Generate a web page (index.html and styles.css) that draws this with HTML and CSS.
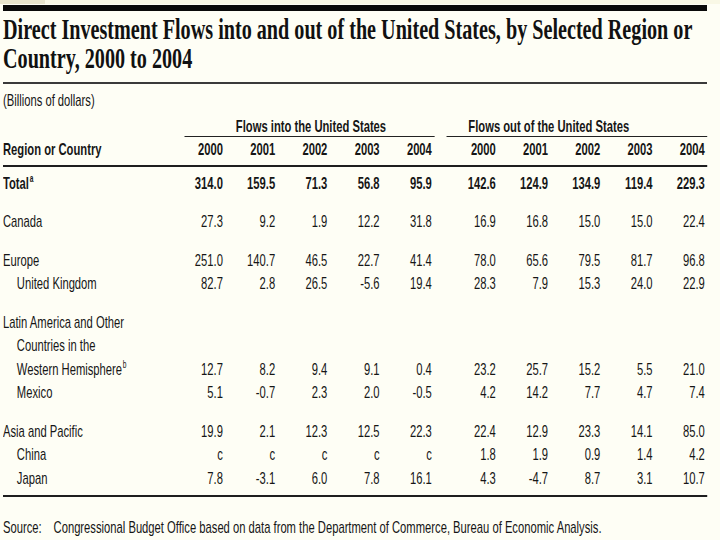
FILE: index.html
```html
<!DOCTYPE html>
<html lang="en">
<head>
<meta charset="utf-8">
<title>Direct Investment Flows into and out of the United States</title>
<link rel="stylesheet" href="styles.css">
</head>
<body>
<div class="strip"><span class="strip-tab"></span></div>
<main class="sheet">
  <div class="bar"></div>
  <h1 class="title">Direct Investment Flows into and out of the United States, by Selected Region or<br>Country, 2000 to 2004</h1>
  <div class="rule-thin"></div>
  <div class="condensed">
    <p class="unit">(Billions of dollars)</p>
    <div class="grid groups">
      <div class="group-head inflow">Flows into the United States</div>
      <div class="group-head outflow">Flows out of the United States</div>
    </div>
    <div class="grid head">
      <div class="label">Region or Country</div>
      <div class="num">2000</div><div class="num">2001</div><div class="num">2002</div><div class="num">2003</div><div class="num">2004</div>
      <div class="num">2000</div><div class="num">2001</div><div class="num">2002</div><div class="num">2003</div><div class="num">2004</div>
    </div>
    <div class="tbody">
      <div class="group first">
        <div class="grid row total">
          <div class="label">Total<sup class="note">a</sup></div>
          <div class="num">314.0</div><div class="num">159.5</div><div class="num">71.3</div><div class="num">56.8</div><div class="num">95.9</div>
          <div class="num">142.6</div><div class="num">124.9</div><div class="num">134.9</div><div class="num">119.4</div><div class="num">229.3</div>
        </div>
      </div>
      <div class="group">
        <div class="grid row">
          <div class="label">Canada</div>
          <div class="num">27.3</div><div class="num">9.2</div><div class="num">1.9</div><div class="num">12.2</div><div class="num">31.8</div>
          <div class="num">16.9</div><div class="num">16.8</div><div class="num">15.0</div><div class="num">15.0</div><div class="num">22.4</div>
        </div>
      </div>
      <div class="group">
        <div class="grid row">
          <div class="label">Europe</div>
          <div class="num">251.0</div><div class="num">140.7</div><div class="num">46.5</div><div class="num">22.7</div><div class="num">41.4</div>
          <div class="num">78.0</div><div class="num">65.6</div><div class="num">79.5</div><div class="num">81.7</div><div class="num">96.8</div>
        </div>
        <div class="grid row">
          <div class="label sub">United Kingdom</div>
          <div class="num">82.7</div><div class="num">2.8</div><div class="num">26.5</div><div class="num">-5.6</div><div class="num">19.4</div>
          <div class="num">28.3</div><div class="num">7.9</div><div class="num">15.3</div><div class="num">24.0</div><div class="num">22.9</div>
        </div>
      </div>
      <div class="group">
        <div class="grid row multi">
          <div class="label hang">Latin America and Other<br>Countries in the<br>Western Hemisphere<sup class="note">b</sup></div>
          <div class="num">12.7</div><div class="num">8.2</div><div class="num">9.4</div><div class="num">9.1</div><div class="num">0.4</div>
          <div class="num">23.2</div><div class="num">25.7</div><div class="num">15.2</div><div class="num">5.5</div><div class="num">21.0</div>
        </div>
        <div class="grid row">
          <div class="label sub">Mexico</div>
          <div class="num">5.1</div><div class="num">-0.7</div><div class="num">2.3</div><div class="num">2.0</div><div class="num">-0.5</div>
          <div class="num">4.2</div><div class="num">14.2</div><div class="num">7.7</div><div class="num">4.7</div><div class="num">7.4</div>
        </div>
      </div>
      <div class="group">
        <div class="grid row">
          <div class="label">Asia and Pacific</div>
          <div class="num">19.9</div><div class="num">2.1</div><div class="num">12.3</div><div class="num">12.5</div><div class="num">22.3</div>
          <div class="num">22.4</div><div class="num">12.9</div><div class="num">23.3</div><div class="num">14.1</div><div class="num">85.0</div>
        </div>
        <div class="grid row">
          <div class="label sub">China</div>
          <div class="num">c</div><div class="num">c</div><div class="num">c</div><div class="num">c</div><div class="num">c</div>
          <div class="num">1.8</div><div class="num">1.9</div><div class="num">0.9</div><div class="num">1.4</div><div class="num">4.2</div>
        </div>
        <div class="grid row">
          <div class="label sub">Japan</div>
          <div class="num">7.8</div><div class="num">-3.1</div><div class="num">6.0</div><div class="num">7.8</div><div class="num">16.1</div>
          <div class="num">4.3</div><div class="num">-4.7</div><div class="num">8.7</div><div class="num">3.1</div><div class="num">10.7</div>
        </div>
      </div>
    </div>
    <p class="source"><span class="source-key">Source:</span>Congressional Budget Office based on data from the Department of Commerce, Bureau of Economic Analysis.</p>
  </div>
</main>
</body>
</html>
```

FILE: styles.css
```css
html, body {
  margin: 0;
  padding: 0;
  overflow: hidden;
}

body {
  background: #fefef5;
  color: #161616;
  font-family: "Liberation Sans", Arial, sans-serif;
  width: 720px;
  height: 540px;
}

.strip {
  height: 4px;
  background: #f9f8e6;
  display: flex;
}

.strip-tab {
  width: 45px;
  background: #e8e4cc;
}

.sheet {
  padding: 0 13px 0 3px;
}

.bar {
  margin-top: 1px;
  height: 6px;
  background: #0a0a0a;
}

.title {
  margin: 4px 0 0 0;
  font-family: "Liberation Serif", "Times New Roman", serif;
  font-weight: bold;
  font-size: 29px;
  line-height: 29px;
  white-space: nowrap;
  width: max-content;
  transform: scaleX(0.695);
  transform-origin: 0 0;
  color: #111;
}

.rule-thin {
  margin-top: 9px;
  height: 2px;
  background: #3a3a3a;
}

.condensed {
  width: 1067px;
  transform: scaleX(0.66);
  transform-origin: 0 0;
  font-size: 17px;
}

.unit {
  margin: 7px 0 0 0;
  line-height: 20px;
}

.grid {
  display: grid;
  grid-template-columns: 254px repeat(5, 79.17px) 17.8px repeat(5, 79.17px) 1fr;
}

.grid > :nth-child(7) {
  grid-column-start: 8;
}

.groups {
  margin-top: 7px;
}

.group-head {
  font-weight: bold;
  line-height: 18px;
  border-bottom: 1.5px solid #222;
  white-space: nowrap;
}

.group-head.inflow {
  grid-column: 2 / 7;
  margin-left: 21px;
  margin-right: -4.5px;
  padding-left: 4px;
  text-align: center;
}

.group-head.outflow {
  grid-column: 8 / -1;
  margin-left: 4.5px;
  padding-left: 33px;
}

.head {
  margin-top: 2.5px;
  line-height: 20px;
  padding-bottom: 5px;
  border-bottom: 2px solid #1e1e1e;
  font-weight: bold;
}

.num {
  text-align: right;
  white-space: nowrap;
}

.label {
  white-space: nowrap;
}

.tbody {
  border-bottom: 2px solid #1e1e1e;
  padding-bottom: 4.25px;
}

.group {
  margin-top: 15px;
}

.group.first {
  margin-top: 5.25px;
}

.row {
  line-height: 23.5px;
}

.row.total {
  font-weight: bold;
}

.row.multi .num {
  align-self: end;
}

.label.sub {
  padding-left: 21px;
}

.label.hang {
  padding-left: 21px;
  text-indent: -21px;
}

.note {
  font-size: 10px;
  line-height: 0;
  vertical-align: 7px;
  margin-left: 1px;
}

.source {
  margin: 21px 0 0 0;
  line-height: 20px;
  white-space: nowrap;
}

.source-key {
  margin-right: 18px;
}
```
